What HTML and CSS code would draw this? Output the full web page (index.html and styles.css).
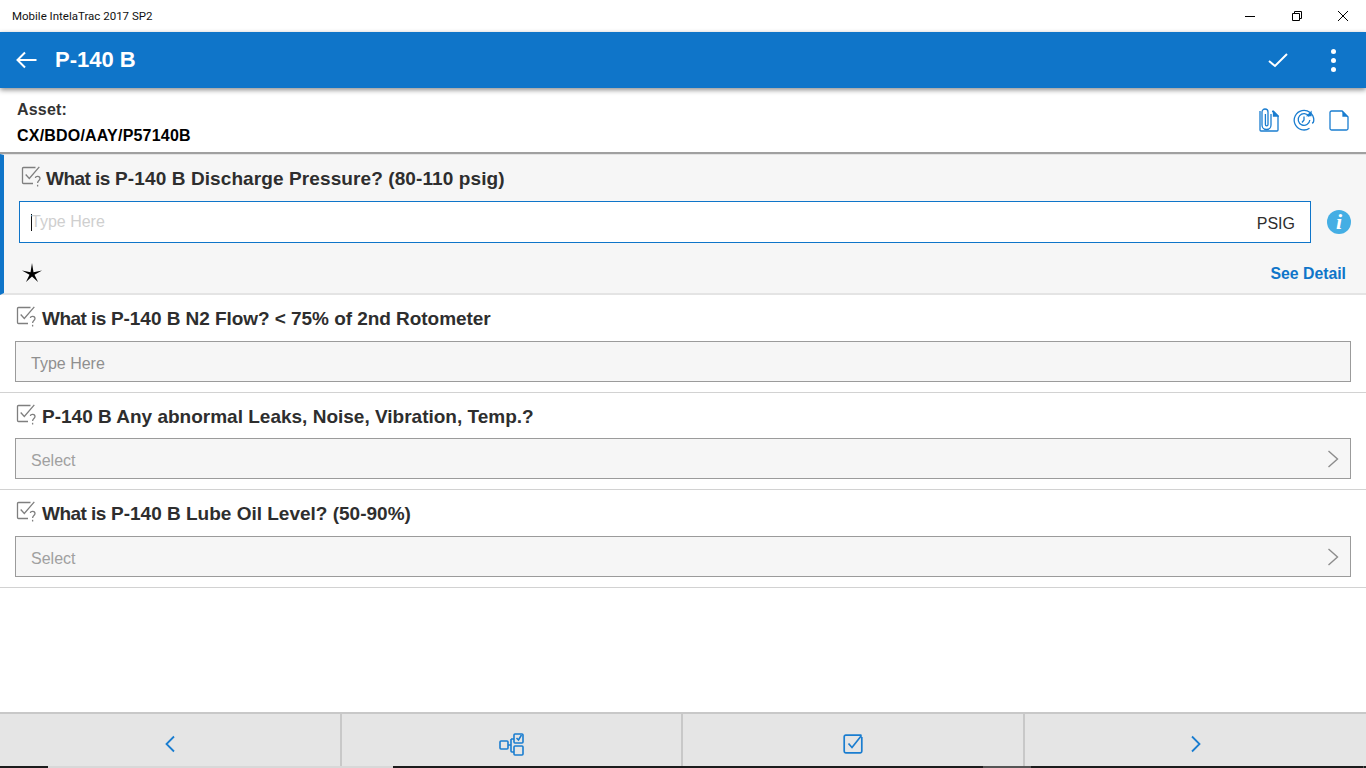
FILE: index.html
```html
<!DOCTYPE html>
<html lang="en">
<head>
<meta charset="utf-8">
<title>Mobile IntelaTrac 2017 SP2</title>
<link rel="stylesheet" href="styles.css">
</head>
<body>
<svg class="defs" width="0" height="0">
  <symbol id="q-icon" viewBox="0 0 21 21">
    <g fill="none" stroke="#7f7f7f" stroke-width="1.300">
      <path d="M14.500 1.500H2.500a1 1 0 0 0-1 1v14a1 1 0 0 0 1 1H12"/>
      <path d="M4.700 8.500l3.600 4L18.300.8"/>
      <path d="M14.300 12c.4-2.200 4.700-2.200 4.700.6 0 2.100-2.400 1.900-2.400 4.400"/>
      <path d="M16.600 18.800v1.700"/>
    </g>
  </symbol>
</svg>
<div class="app">
  <div class="titlebar">
    <span class="win-title">Mobile IntelaTrac 2017 SP2</span>
    <div class="win-buttons">
      <span class="win-btn"><svg width="12" height="12" viewBox="0 0 12 12"><path d="M1 6.500h10" stroke="#000" fill="none"/></svg></span>
      <span class="win-btn"><svg width="12" height="12" viewBox="0 0 12 12"><path d="M1.500 3.500h7v7h-7zM3.500 3.500v-2h7v7h-2" stroke="#000" fill="none"/></svg></span>
      <span class="win-btn"><svg width="12" height="12" viewBox="0 0 12 12"><path d="M1 1l10 10M11 1L1 11" stroke="#000" fill="none"/></svg></span>
    </div>
  </div>
  <header class="appbar">
    <svg class="back" width="22" height="18" viewBox="0 0 22 18"><path d="M20.500 9H1.800M9 1.500L1.500 9 9 16.500" stroke="#fff" stroke-width="2" fill="none"/></svg>
    <h1 class="appbar-title">P-140 B</h1>
    <svg class="appbar-check" width="20" height="16" viewBox="0 0 20 16"><path d="M1 9l6 5L19 2" stroke="#fff" stroke-width="2" fill="none"/></svg>
    <span class="dots"><i></i><i></i><i></i></span>
  </header>
  <section class="asset">
    <div class="asset-text">
      <div class="asset-label">Asset:</div>
      <div class="asset-value">CX/BDO/AAY/P57140B</div>
    </div>
    <div class="asset-icons">
      <svg width="20" height="24" viewBox="0 0 20 24" fill="none" stroke="#1a7dd0" stroke-width="1.300"><path d="M13 3.500h1.500L19 8v14a1 1 0 0 1-1 1H2a1 1 0 0 1-1-1V3"/><path d="M14.500 3.500V8H19z" fill="#1a7dd0"/><path d="M12 6v11a4.500 4.500 0 0 1-9 0V4a3 3 0 0 1 6 0v12.500a1.300 1.300 0 0 1-2.600 0V6"/></svg>
      <svg width="22" height="22" viewBox="0 0 22 22" fill="none" stroke="#1a7dd0" stroke-width="1.300"><path d="M16.500 19.300A9.800 9.800 0 1 1 20.800 11c0 1.500-.6 3-1.800 3.200"/><path d="M16 7.500A5.800 5.800 0 1 0 16.800 11"/><path d="M11 7.500V11l-2 2.500"/><path d="M14.500 6.500h3.500V3z" fill="#1a7dd0"/></svg>
      <svg width="20" height="21" viewBox="0 0 20 21" fill="none" stroke="#1a7dd0" stroke-width="1.300"><path d="M13 1H2.500A1.500 1.500 0 0 0 1 2.500v16A1.500 1.500 0 0 0 2.500 20h15a1.500 1.500 0 0 0 1.500-1.500V7z"/><path d="M14 2v4h4z" fill="#1a7dd0"/></svg>
    </div>
  </section>
  <main class="questions">
    <article class="q q-active">
      <div class="q-head">
        <svg class="q-icon" width="21" height="21"><use href="#q-icon"/></svg>
        <span class="q-text q-wide"><span class="wi">What is</span> P-140 B Discharge Pressure? (80-110 psig)</span>
      </div>
      <div class="q-row">
        <div class="field field-focus"><span class="caret"></span><span class="ph-focus">Type Here</span><span class="unit">PSIG</span></div>
        <svg class="info" width="24" height="24" viewBox="0 0 24 24"><circle cx="12" cy="12" r="12" fill="#44aee4"/><text x="12" y="18.500" class="info-i">i</text></svg>
      </div>
      <div class="q-foot">
        <svg width="20" height="20" viewBox="0 0 20 20"><path d="M10 0L11.500 9.300 20 7.500 12.500 11.700 16 19 10 13.500 4 19 7.500 11.700 0 7.500 8.500 9.300z" fill="#000"/></svg>
        <a class="see-detail">See Detail</a>
      </div>
    </article>
    <article class="q q-h98">
      <div class="q-head">
        <svg class="q-icon" width="21" height="21"><use href="#q-icon"/></svg>
        <span class="q-text q-narrow"><span class="wi">What is</span> P-140 B N2 Flow? &lt; 75% of 2nd Rotometer</span>
      </div>
      <div class="field"><span class="ph">Type Here</span></div>
    </article>
    <article class="q q-h97">
      <div class="q-head">
        <svg class="q-icon" width="21" height="21"><use href="#q-icon"/></svg>
        <span class="q-text">P-140 B Any abnormal Leaks, Noise, Vibration, Temp.?</span>
      </div>
      <div class="field"><span class="ph ph-select">Select</span><svg class="chev" width="12" height="18" viewBox="0 0 12 18"><path d="M1.500 1l9 8-9 8" stroke="#8c8c8c" stroke-width="1.400" fill="none"/></svg></div>
    </article>
    <article class="q q-h98">
      <div class="q-head">
        <svg class="q-icon" width="21" height="21"><use href="#q-icon"/></svg>
        <span class="q-text"><span class="wi">What is</span> P-140 B Lube Oil Level? (50-90%)</span>
      </div>
      <div class="field"><span class="ph ph-select">Select</span><svg class="chev" width="12" height="18" viewBox="0 0 12 18"><path d="M1.500 1l9 8-9 8" stroke="#8c8c8c" stroke-width="1.400" fill="none"/></svg></div>
    </article>
  </main>
  <nav class="bottombar">
    <button class="nav-btn"><svg width="12" height="18" viewBox="0 0 12 18"><path d="M10 1.500L2.500 9l7.500 7.500" stroke="#1a7dd0" stroke-width="1.800" fill="none"/></svg></button>
    <button class="nav-btn"><svg width="26" height="24" viewBox="0 0 26 24" fill="none" stroke="#1a7dd0" stroke-width="1.600"><rect x="1" y="9" width="8" height="8" rx="1"/><path d="M9 13h3M12 7v12a1 1 0 0 0 1 1h2M12 7h3"/><rect x="15" y="2" width="9" height="9" rx="1"/><path d="M17.500 6l2 2 3-5"/><rect x="15" y="14" width="9" height="9" rx="1"/></svg></button>
    <button class="nav-btn"><svg width="20" height="20" viewBox="0 0 20 20" fill="none" stroke="#1a7dd0" stroke-width="1.700"><path d="M18.800 3v14.300a1.500 1.500 0 0 1-1.500 1.500H2.700a1.500 1.500 0 0 1-1.500-1.500V2.700a1.500 1.500 0 0 1 1.500-1.500h15.800"/><path d="M5.500 9.500l3.500 4L18.500 1.500"/></svg></button>
    <button class="nav-btn"><svg width="12" height="18" viewBox="0 0 12 18"><path d="M2 1.500L9.500 9 2 16.500" stroke="#1a7dd0" stroke-width="1.800" fill="none"/></svg></button>
  </nav>
  <div class="taskbar"><i class="tb-dark tb-a"></i><i class="tb-light tb-b"></i><i class="tb-dark tb-c"></i><i class="tb-grey tb-d"></i><i class="tb-dark tb-e"></i><i class="tb-grey tb-f"></i><i class="tb-dark tb-g"></i></div>
</div>
</body>
</html>
```
FILE: styles.css
```css
* { box-sizing: border-box; }
html, body { margin: 0; height: 100%; overflow: hidden; background: #fff; }
body { font-family: "Liberation Sans", Arial, sans-serif; color: #2e2e2e; }
.defs { position: absolute; }
.app { width: 1366px; height: 768px; display: flex; flex-direction: column; }

.titlebar { height: 32px; flex: none; display: flex; align-items: center; justify-content: space-between; background: #fff; }
.win-title { font-family: Roboto, sans-serif; font-size: 11.500px; color: #111; padding-left: 12px; }
.win-buttons { display: flex; }
.win-btn { width: 46px; height: 32px; display: flex; align-items: center; justify-content: center; }
.win-btn:first-child svg { margin-right: 3px; }
.win-btn:last-child svg { margin-right: 1px; }

.appbar { height: 56px; flex: none; position: relative; z-index: 2; display: flex; align-items: center; background: #0f75c9; box-shadow: 0 2px 5px rgba(0,0,0,.45); padding: 0 30px 0 16px; }
.back { flex: none; }
.appbar-title { margin: 0 0 0 17px; font-size: 22px; font-weight: 700; color: #fff; flex: 1; }
.appbar-check { flex: none; margin-right: 43px; }
.dots { display: flex; flex-direction: column; gap: 4px; flex: none; width: 5px; }
.dots i { width: 5px; height: 5px; border-radius: 50%; background: #fff; display: block; }

.asset { height: 66px; flex: none; display: flex; justify-content: space-between; padding: 12px 17px 0; border-bottom: 2px solid #a0a0a0; }
.asset-label { font-size: 16px; font-weight: 700; color: #333; line-height: 18px; letter-spacing: .2px; margin-top: 1px; }
.asset-value { font-size: 16px; font-weight: 700; color: #000; line-height: 18px; letter-spacing: .2px; margin-top: 8px; }
.asset-icons { display: flex; gap: 14px; align-items: center; height: 40px; }

.questions { flex: 1; display: flex; flex-direction: column; min-height: 0; }
.q { border-bottom: 1px solid #d2d2d2; padding: 0 15px; flex: none; }
.q-h98 { height: 98px; }
.q-h97 { height: 97px; }
.q-h97 .q-head { height: 45px; }
.q-active { height: 141px; background: #f6f6f6; border-top: 1px solid #e4e4e4; border-left: 4px solid #0f75c9; border-bottom: 2px solid #e4e4e4; }
.q-head { display: flex; align-items: flex-start; height: 46px; padding-top: 11px; padding-left: 1px; gap: 5px; }
.q-active .q-head { padding-left: 2px; gap: 4px; }
.q-text { font-size: 19px; line-height: 22px; margin-top: 2px; font-weight: 700; color: #2e2e2e; white-space: nowrap; }
.q-wide { letter-spacing: .1px; }
.q-narrow { letter-spacing: -.05px; }
.wi { letter-spacing: -.55px; }
.q-icon { flex: none; }
.q-row { display: flex; align-items: center; gap: 16px; }
.field { height: 41px; border: 1px solid #9b9b9b; background: #f6f6f6; display: flex; align-items: center; justify-content: space-between; padding: 0 11px 0 15px; font-size: 16px; flex: 1; }
.field-focus { height: 42px; background: #fff; border-color: #0f75c9; padding: 0 15px 0 11px; }
.caret { width: 1px; height: 17px; background: #111; flex: none; margin-right: -1px; }
.ph { color: #8f8f8f; margin-top: 4px; }
.ph-select { color: #a0a0a0; }
.ph-focus { color: #cfcfcf; flex: 1; }
.unit { color: #2e2e2e; margin-top: 3px; }
.info { flex: none; }
.info-i { font-family: "Liberation Serif", serif; font-size: 22px; font-weight: 700; font-style: italic; fill: #fff; text-anchor: middle; }
.q-foot { display: flex; justify-content: space-between; align-items: center; padding: 20px 5px 0 3px; }
.see-detail { font-size: 15.800px; font-weight: 700; color: #0f75c9; margin-top: 1px; }

.bottombar { height: 54px; flex: none; display: grid; grid-template-columns: 342px 341px 342px 341px; background: #e5e5e5; border-top: 2px solid #c8c8c8; }
.nav-btn { border: 0; border-right: 2px solid #c8c8c8; background: transparent; padding: 7px 0 0; display: flex; align-items: center; justify-content: center; }
.nav-btn:last-child { border-right: 0; }

.taskbar { height: 2px; flex: none; display: flex; }
.taskbar i { display: block; height: 2px; }
.tb-dark { background: #1c1c1c; }
.tb-light { background: #d8d8d8; }
.tb-grey { background: #555; }
.tb-a { width: 48px; }
.tb-b { width: 345px; }
.tb-c { width: 590px; }
.tb-d { width: 48px; }
.tb-e { flex: 1; }
.tb-f { width: 1px; }
.tb-g { width: 2px; }
```
